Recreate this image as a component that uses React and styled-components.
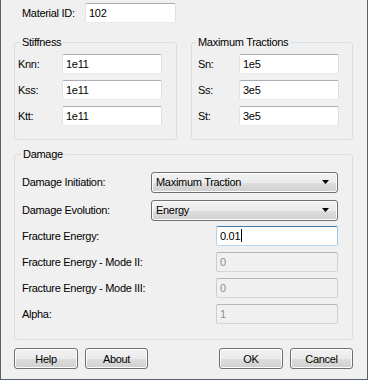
import React from 'react'
import styled, { createGlobalStyle, css } from 'styled-components'

const GlobalStyle = createGlobalStyle`
  html, body {
    margin: 0;
    padding: 0;
    background: #f0f0f0;
  }
  body {
    font-family: 'Liberation Sans', Arial, sans-serif;
    font-size: 11px;
    letter-spacing: -0.3px;
    color: #000;
  }
`

const Window = styled.div`
  box-sizing: border-box;
  width: 368px;
  height: 380px;
  padding: 3px 14px 0 13px;
  background: #f0f0f0;
  border-left: 1px solid #55606e;
  border-right: 1px solid #55606e;
  border-bottom: 1px solid #55606e;
  display: flex;
  flex-direction: column;
`

const IdRow = styled.div`
  display: grid;
  grid-template-columns: 63px 91px;
  align-items: center;
  padding-left: 8px;
  height: 20px;
`

const Label = styled.span`
  white-space: nowrap;
  line-height: 13px;
`

const TextBox = styled.div`
  box-sizing: border-box;
  height: 20px;
  width: ${p => p.$width || 100}px;
  padding: 0 3px;
  line-height: 18px;
  white-space: nowrap;
  background: #fff;
  border: 1px solid;
  border-color: #abadb3 #dbdfe6 #e3e9ef #e2e3ea;
  border-radius: 2px;
  ${p => p.$focused && css`
    border-color: #3d7bad #a4c9e3 #b7d9ed #b5cfe7;
  `}
  ${p => p.$disabled && css`
    background: #f0f0f0;
    color: #8d8d8d;
    border-color: #b5b5b5 #cdcdcd #d5d5d5 #cdcdcd;
  `}
`

const Caret = styled.span`
  display: inline-block;
  width: 1px;
  height: 13px;
  margin-left: 1px;
  background: #000;
  vertical-align: -2px;
`

const Groups = styled.div`
  display: grid;
  grid-template-columns: 163px 162px;
  column-gap: 14px;
  margin-top: 13px;
`

const Group = styled.fieldset`
  margin: 0;
  min-width: 0;
  padding: ${p => p.$padding};
  border: 1px solid #d5dfe5;
  border-radius: 3px;
`

const DamageGroup = styled(Group)`
  margin-top: 8px;
`

const Title = styled.legend`
  padding: 0 2px;
  margin-left: ${p => p.$offset}px;
  line-height: 13px;
`

const Rows = styled.div`
  display: flex;
  flex-direction: column;
  gap: 6px;
`

const Row = styled.div`
  display: grid;
  grid-template-columns: ${p => p.$label}px auto;
  align-items: center;
  height: 20px;
`

const DamageRow = styled.div`
  display: flex;
  justify-content: space-between;
  align-items: center;
  height: 20px;
  margin-bottom: ${p => (p.$spaced ? 2 : 0)}px;
`

const buttonFace = css`
  box-sizing: border-box;
  border: 1px solid #707070;
  border-radius: 3px;
  background: linear-gradient(#f2f2f2 0%, #ebebeb 50%, #dddddd 51%, #cfcfcf 100%);
  box-shadow: inset 0 0 0 1px #fcfcfc;
`

const Select = styled.div`
  ${buttonFace};
  width: 187px;
  height: 21px;
  padding: 0 8px 0 4px;
  display: flex;
  align-items: center;
  justify-content: space-between;
`

const Footer = styled.div`
  display: flex;
  justify-content: space-between;
  margin-top: 8px;
`

const ButtonGroup = styled.div`
  display: flex;
  gap: 7px;
`

const Button = styled.button`
  ${buttonFace};
  width: ${p => p.$width}px;
  height: 21px;
  padding: 0;
  font: inherit;
  letter-spacing: inherit;
  color: #000;
`

const Arrow = () => (
  <svg width='7' height='4' viewBox='0 0 7 4'>
    <path d='M0 0h7L3.5 4z' fill='#000' />
  </svg>
)

const stiffness = [['Knn:', '1e11'], ['Kss:', '1e11'], ['Ktt:', '1e11']]
const tractions = [['Sn:', '1e5'], ['Ss:', '3e5'], ['St:', '3e5']]

const energies = [
  ['Fracture Energy - Mode II:', '0'],
  ['Fracture Energy - Mode III:', '0'],
  ['Alpha:', '1']
]

export default function App () {
  return (
    <Window>
      <GlobalStyle />
      <IdRow>
        <Label>Material ID:</Label>
        <TextBox $width={91}>102</TextBox>
      </IdRow>

      <Groups>
        <Group $padding='5px 14px 13px 3px'>
          <Title $offset={2}>Stiffness</Title>
          <Rows>
            {stiffness.map(([label, value]) => (
              <Row key={label} $label={44}>
                <Label>{label}</Label>
                <TextBox>{value}</TextBox>
              </Row>
            ))}
          </Rows>
        </Group>
        <Group $padding='5px 13px 13px 6px'>
          <Title $offset={-2}>Maximum Tractions</Title>
          <Rows>
            {tractions.map(([label, value]) => (
              <Row key={label} $label={41}>
                <Label>{label}</Label>
                <TextBox>{value}</TextBox>
              </Row>
            ))}
          </Rows>
        </Group>
      </Groups>

      <DamageGroup $padding='11px 14px 15px 7px'>
        <Title $offset={-1}>Damage</Title>
        <Rows>
          <DamageRow $spaced>
            <Label>Damage Initiation:</Label>
            <Select>Maximum Traction<Arrow /></Select>
          </DamageRow>
          <DamageRow>
            <Label>Damage Evolution:</Label>
            <Select>Energy<Arrow /></Select>
          </DamageRow>
          <DamageRow>
            <Label>Fracture Energy:</Label>
            <TextBox $width={122} $focused>0.01<Caret /></TextBox>
          </DamageRow>
          {energies.map(([label, value]) => (
            <DamageRow key={label}>
              <Label>{label}</Label>
              <TextBox $width={122} $disabled>{value}</TextBox>
            </DamageRow>
          ))}
        </Rows>
      </DamageGroup>

      <Footer>
        <ButtonGroup>
          <Button $width={64}>Help</Button>
          <Button $width={63}>About</Button>
        </ButtonGroup>
        <ButtonGroup>
          <Button $width={64}>OK</Button>
          <Button $width={63}>Cancel</Button>
        </ButtonGroup>
      </Footer>
    </Window>
  )
}
